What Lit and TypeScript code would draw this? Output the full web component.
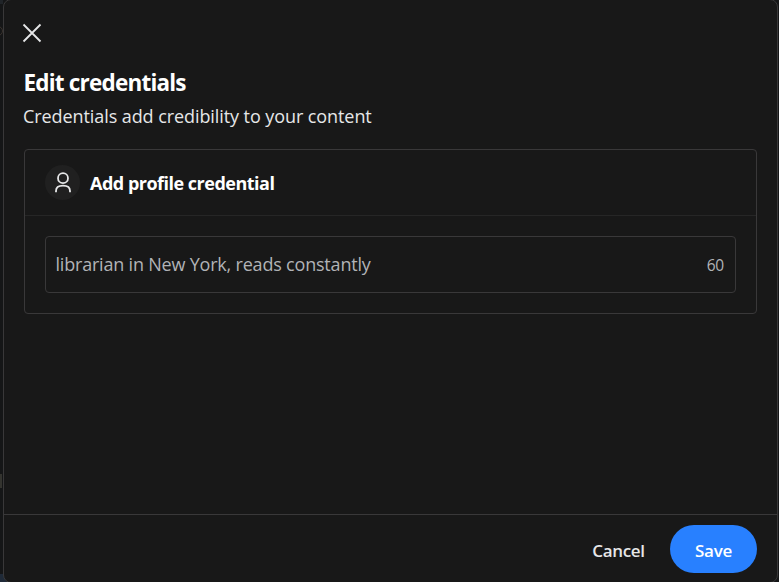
import { LitElement, html, css, svg } from "lit";
import { customElement, property } from "lit/decorators.js";

@customElement("app-root")
export class AppRoot extends LitElement {
  @property() credential = "librarian in New York, reads constantly";
  @property({ type: Number }) limit = 60;

  static styles = css`
    :host {
      display: block;
      position: relative;
      height: 582px;
      overflow: hidden;
      background: #151617;
      font-family: "Open Sans", "Noto Sans", sans-serif;
      color: #e6e7e8;
    }
    * {
      box-sizing: border-box;
    }
    .behind {
      position: absolute;
      left: 0;
      width: 3px;
    }
    .edge-top { top: 0; height: 4px; background: #202428; }
    .edge-ring { top: 26px; left: -7px; width: 10px; height: 10px; border: 1px solid #3a332e; border-radius: 50%; }
    .edge-bar { top: 474px; width: 2px; height: 14px; background: #34342f; }
    .edge-bottom { top: 574px; width: 8px; height: 8px; background: #1f2a38; }
    .modal {
      position: relative;
      display: flex;
      flex-direction: column;
      height: 584px;
      margin: -1px 1px 0 3px;
      border: 1px solid #393839;
      border-radius: 8px;
      background: #181818;
    }
    .content {
      flex: 1;
      padding: 20px 20px 0;
    }
    .close {
      display: block;
      width: 26px;
      height: 26px;
      margin: 0 0 0 -5px;
      padding: 0;
      border: 0;
      background: none;
    }
    svg {
      display: block;
    }
    h1 {
      margin: 22px 0 0 -0.5px;
      font-size: 22.5px;
      line-height: 30px;
      font-weight: 700;
      letter-spacing: -0.8px;
      color: #fff;
      white-space: nowrap;
    }
    .sub {
      margin: 5px 0 0 -1px;
      font-size: 18px;
      line-height: 26px;
      letter-spacing: -0.08px;
      white-space: nowrap;
    }
    .card {
      height: 165px;
      margin-top: 20px;
      border: 1px solid #393839;
      border-radius: 4px;
    }
    .card-head {
      display: flex;
      align-items: center;
      height: 66px;
      padding-left: 20px;
      border-bottom: 1px solid #262626;
    }
    .avatar {
      width: 35px;
      height: 35px;
      border-radius: 50%;
      background: #202020;
    }
    h2 {
      margin: 0 0 0 10px;
      font-size: 18px;
      line-height: 26px;
      font-weight: 700;
      letter-spacing: -0.5px;
      color: #fff;
      white-space: nowrap;
    }
    .field {
      display: flex;
      align-items: center;
      justify-content: space-between;
      height: 57px;
      margin: 20px;
      padding: 0 11px 0 9.5px;
      border: 1px solid #393839;
      border-radius: 4px;
      color: #b1b3b6;
      white-space: nowrap;
    }
    .value {
      margin-bottom: 2px;
      font-size: 18px;
      letter-spacing: -0.2px;
    }
    .count {
      font-size: 15.5px;
      letter-spacing: -0.2px;
    }
    footer {
      display: flex;
      align-items: center;
      justify-content: flex-end;
      height: 68px;
      padding: 1px 20px 0 0;
      border-top: 1px solid #393839;
    }
    footer button {
      height: 48px;
      padding: 3px 0 0;
      border: 0;
      border-radius: 24px;
      background: none;
      color: #e6e7e8;
      font: 600 17px/24px "Open Sans", "Noto Sans", sans-serif;
      letter-spacing: -0.3px;
    }
    .cancel { width: 103px; }
    footer .save {
      width: 87px;
      background: #2880ff;
      color: #fff;
    }
  `;

  render() {
    return html`
      <div class="behind edge-top"></div>
      <div class="behind edge-ring"></div>
      <div class="behind edge-bar"></div>
      <div class="behind edge-bottom"></div>
      <section class="modal" role="dialog" aria-label="Edit credentials">
        <div class="content">
          <button class="close" aria-label="Close">
            <svg width="26" height="26" viewBox="0 0 26 26" fill="none" stroke="#e6e7e8" stroke-width="1.8">
              ${svg`<path d="M4.5 4.5 21.5 21.5M21.5 4.5 4.5 21.5" />`}
            </svg>
          </button>
          <h1>Edit credentials</h1>
          <p class="sub">Credentials add credibility to your content</p>
          <div class="card">
            <div class="card-head">
              <div class="avatar">
                <svg width="35" height="35" viewBox="0 0 35 35" fill="none" stroke="#e6e7e8" stroke-width="1.8">
                  ${svg`<circle cx="18" cy="13.2" r="5" /><path d="M11 27.2v-1.2C11 22.6 14 20.7 18 20.7s7 1.9 7 5.3v1.2" />`}
                </svg>
              </div>
              <h2>Add profile credential</h2>
            </div>
            <div class="field">
              <span class="value">${this.credential}</span>
              <span class="count">${this.limit}</span>
            </div>
          </div>
        </div>
        <footer>
          <button class="cancel">Cancel</button>
          <button class="save">Save</button>
        </footer>
      </section>
    `;
  }
}
